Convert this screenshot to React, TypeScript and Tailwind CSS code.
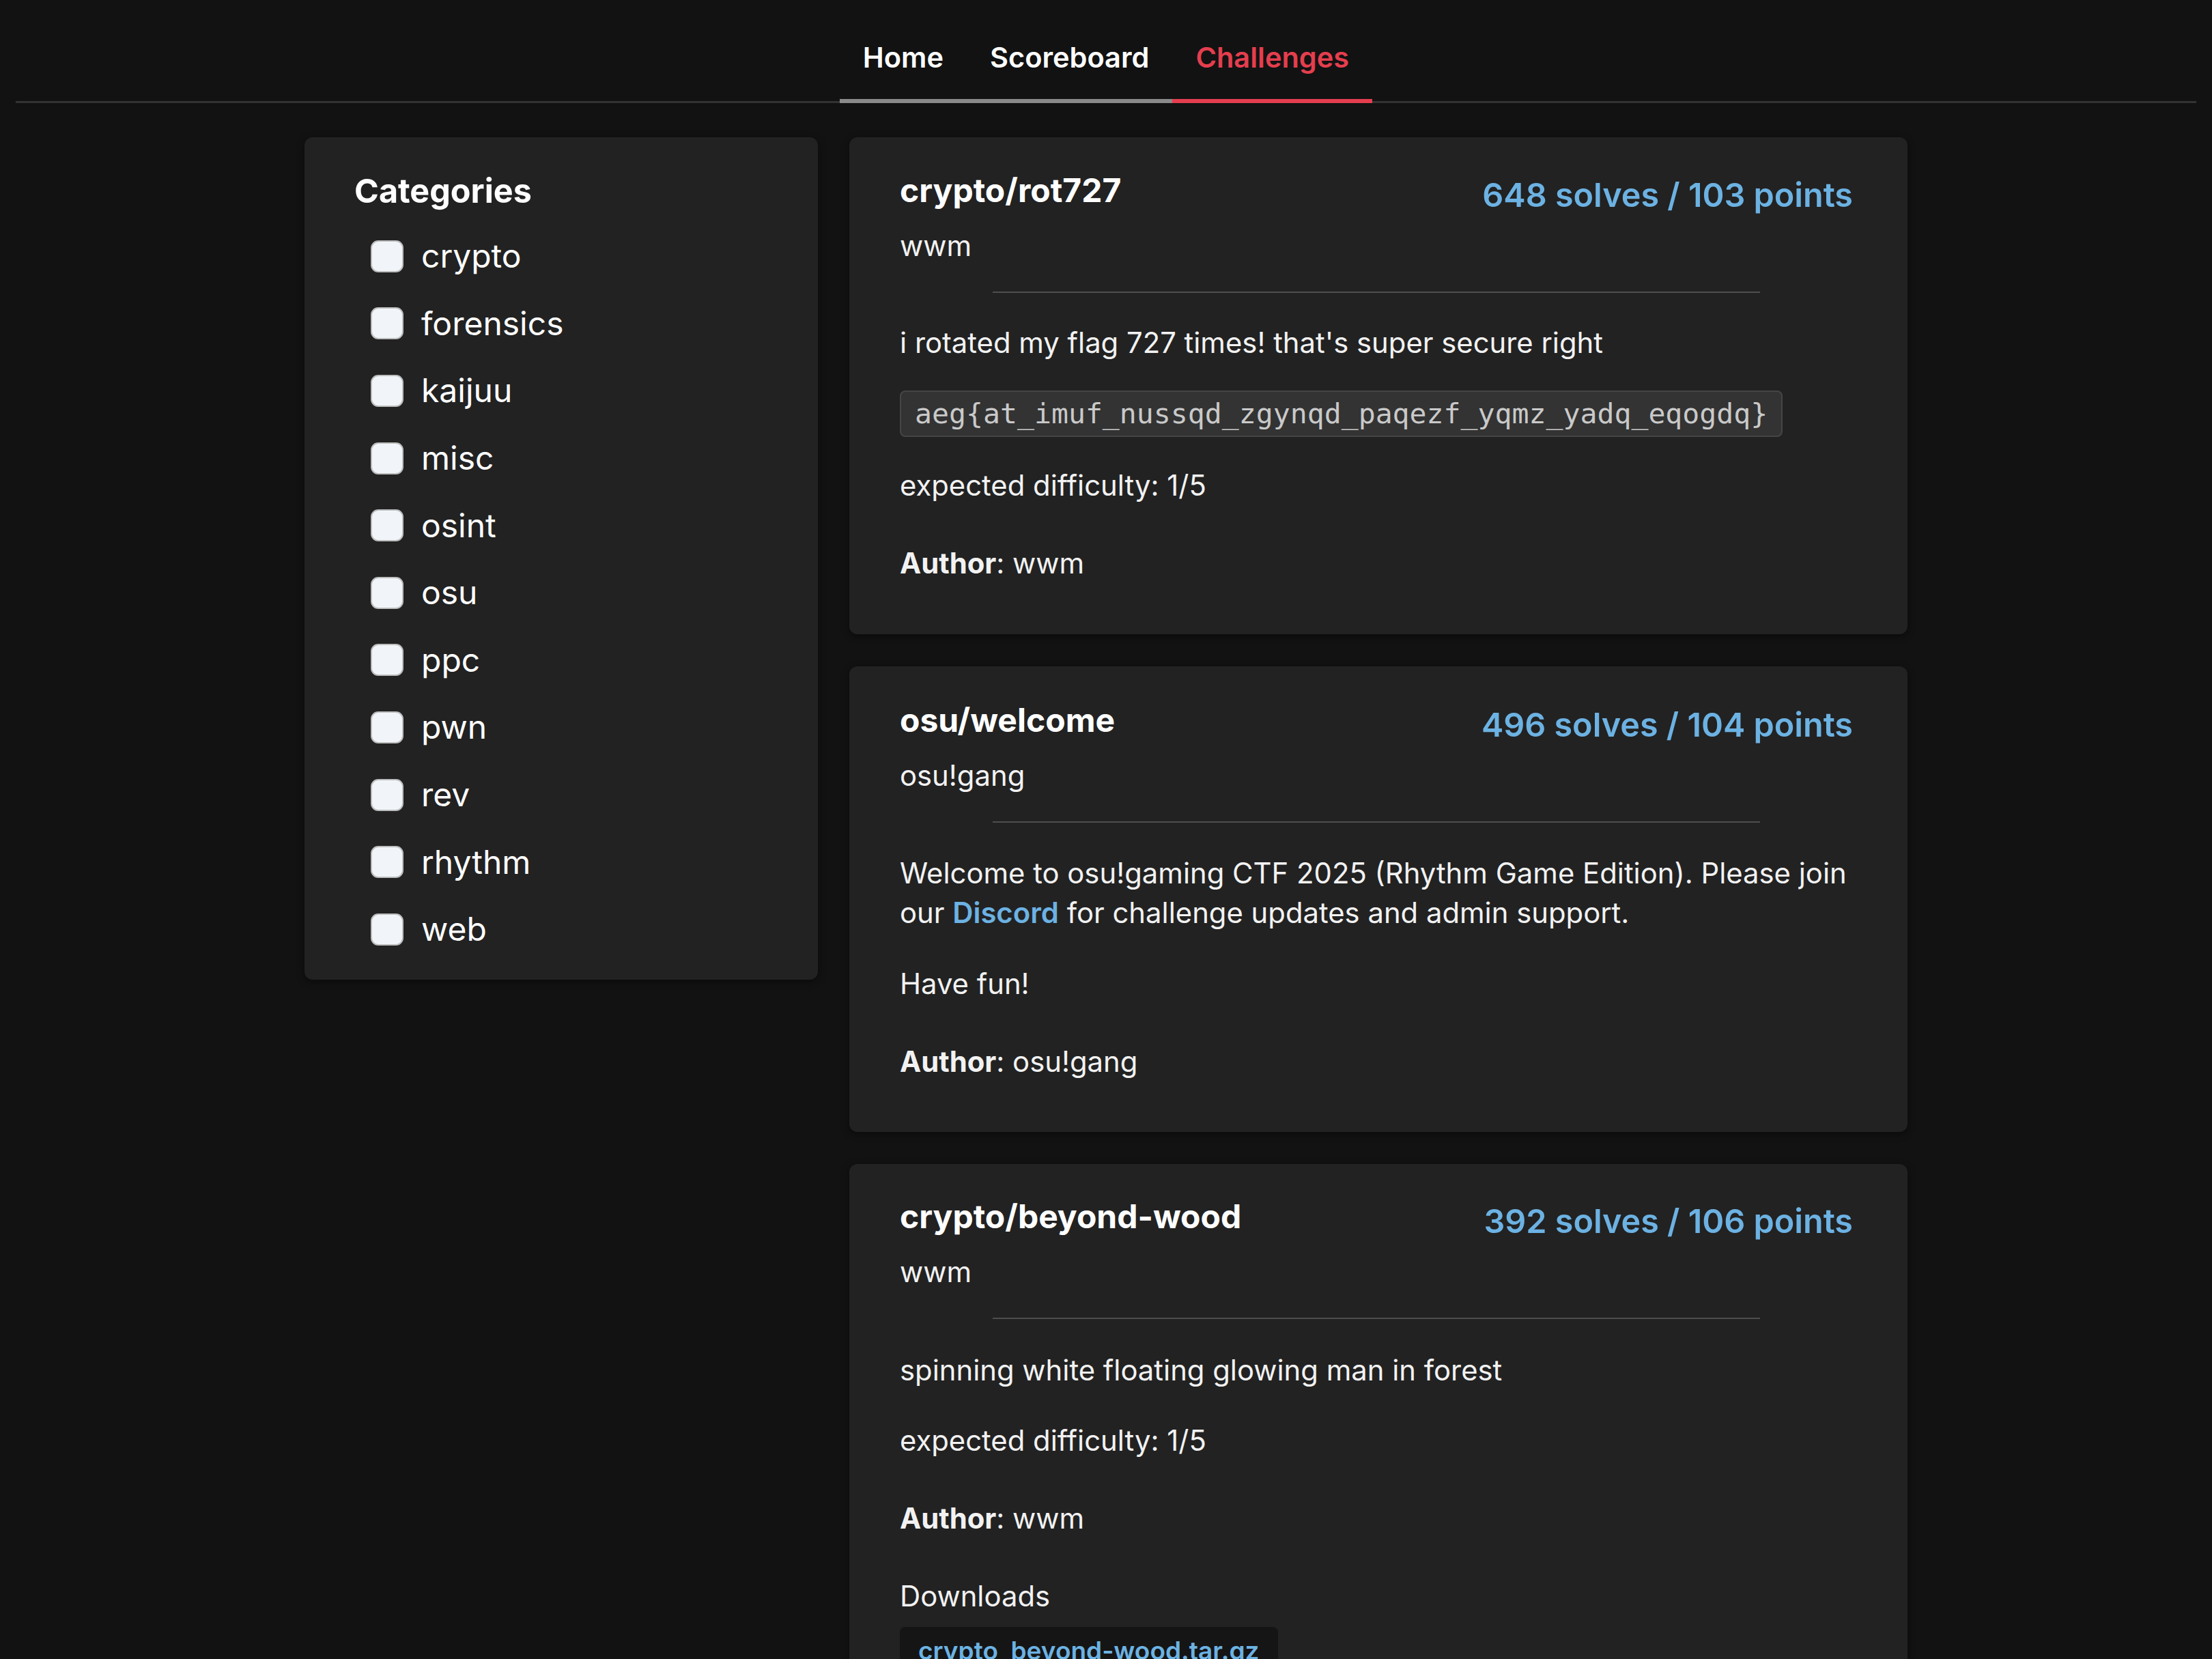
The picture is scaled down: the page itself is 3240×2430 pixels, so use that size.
const categories = ["crypto", "forensics", "kaijuu", "misc", "osint", "osu", "ppc", "pwn", "rev", "rhythm", "web"];

function Tab({ label, active }: { label: string; active?: boolean }) {
  return (
    <a
      className={
        active
          ? "-mb-[3px] border-b-[6px] border-[#e53e4e] px-[34px] py-[30px] text-[41.5px] leading-[61px] font-semibold text-[#e53e4e]"
          : "-mb-[3px] border-b-[6px] border-[#8a8a8a] px-[34px] py-[30px] text-[41.5px] leading-[61px] font-semibold text-white"
      }
    >
      {label}
    </a>
  );
}

function CardHead({ title, author, solves, points }: { title: string; author: string; solves: number; points: number }) {
  return (
    <>
      <div className="flex items-start justify-between">
        <h3 className="text-[48px] leading-[46px] font-bold text-white">{title}</h3>
        <p className="text-[48.5px] leading-[60px] font-semibold text-[#6cb2e3]">
          {solves} solves / {points} points
        </p>
      </div>
      <p className="mt-[15px]">{author}</p>
      <div className="mx-auto mt-[38px] h-[2px] w-[1124px] bg-[#4e4e4e]" />
    </>
  );
}

function Author({ name }: { name: string }) {
  return (
    <p className="mt-[56px]">
      <span className="font-bold">Author</span>: {name}
    </p>
  );
}

export default function App() {
  return (
    <div className="min-h-screen bg-[#121212] pb-[40px] font-['Inter',sans-serif] text-[#f2f2f2]">
      <nav className="mx-[23px] flex justify-center border-b-[3px] border-[#333333] pt-[24px]">
        <Tab label="Home" />
        <Tab label="Scoreboard" />
        <Tab label="Challenges" active />
      </nav>

      <div className="mx-auto mt-[50px] flex w-[2348px] items-start gap-[46px]">
        <aside className="w-[752px] shrink-0 rounded-[12px] bg-[#222222] px-[73px] pt-[50px] pb-[24px] shadow-[0_3px_12px_rgba(0,0,0,0.45)]">
          <h2 className="text-[48.5px] leading-[58px] font-bold text-white">Categories</h2>
          <div className="mt-[17px] flex flex-col">
            {categories.map((c) => (
              <label key={c} className="flex h-[98.6px] items-center gap-[26px] pl-[24px] text-[48px] leading-[58px] text-white">
                <span className="h-[47px] w-[48px] shrink-0 rounded-[11px] border-[2px] border-[#bdbdbd] bg-[#f1f5f9]" />
                {c}
              </label>
            ))}
          </div>
        </aside>

        <main className="flex w-[1550px] flex-col gap-[47px] text-[41.8px] leading-[58px]">
          <section className="rounded-[12px] bg-[#222222] pt-[55px] pr-[80px] pb-[75px] pl-[74px] shadow-[0_3px_12px_rgba(0,0,0,0.45)]">
            <CardHead title="crypto/rot727" author="wwm" solves={648} points={103} />
            <p className="mt-[44px]">i rotated my flag 727 times! that's super secure right</p>
            <code className="mt-[41px] inline-block rounded-[8px] border-[2px] border-[#454545] bg-[#333333] px-[20px] py-[7px] font-['DejaVu_Sans_Mono',monospace] text-[41.5px] leading-[50px] text-[#c9c9c9]">
              aeg{"{"}at_imuf_nussqd_zgynqd_paqezf_yqmz_yadq_eqogdq{"}"}
            </code>
            <p className="mt-[42px]">expected difficulty: 1/5</p>
            <Author name="wwm" />
          </section>

          <section className="rounded-[12px] bg-[#222222] pt-[56px] pr-[80px] pb-[74px] pl-[74px] shadow-[0_3px_12px_rgba(0,0,0,0.45)]">
            <CardHead title="osu/welcome" author="osu!gang" solves={496} points={104} />
            <p className="mt-[45px]">
              Welcome to osu!gaming CTF 2025 (Rhythm Game Edition). Please join our{" "}
              <a className="font-semibold text-[#6cb2e3]">Discord</a> for challenge updates and admin support.
            </p>
            <p className="mt-[46px]">Have fun!</p>
            <Author name="osu!gang" />
          </section>

          <section className="rounded-[12px] bg-[#222222] pt-[54px] pr-[80px] pb-[77px] pl-[74px] shadow-[0_3px_12px_rgba(0,0,0,0.45)]">
            <CardHead title="crypto/beyond-wood" author="wwm" solves={392} points={106} />
            <p className="mt-[46px]">spinning white floating glowing man in forest</p>
            <p className="mt-[45px]">expected difficulty: 1/5</p>
            <Author name="wwm" />
            <p className="mt-[56px]">Downloads</p>
            <a className="mt-[16px] inline-block rounded-[8px] bg-[#151515] px-[27px] py-[10px] text-[37px] leading-[50px] font-semibold text-[#6cb2e3]">
              crypto_beyond-wood.tar.gz
            </a>
          </section>
        </main>
      </div>
    </div>
  );
}
